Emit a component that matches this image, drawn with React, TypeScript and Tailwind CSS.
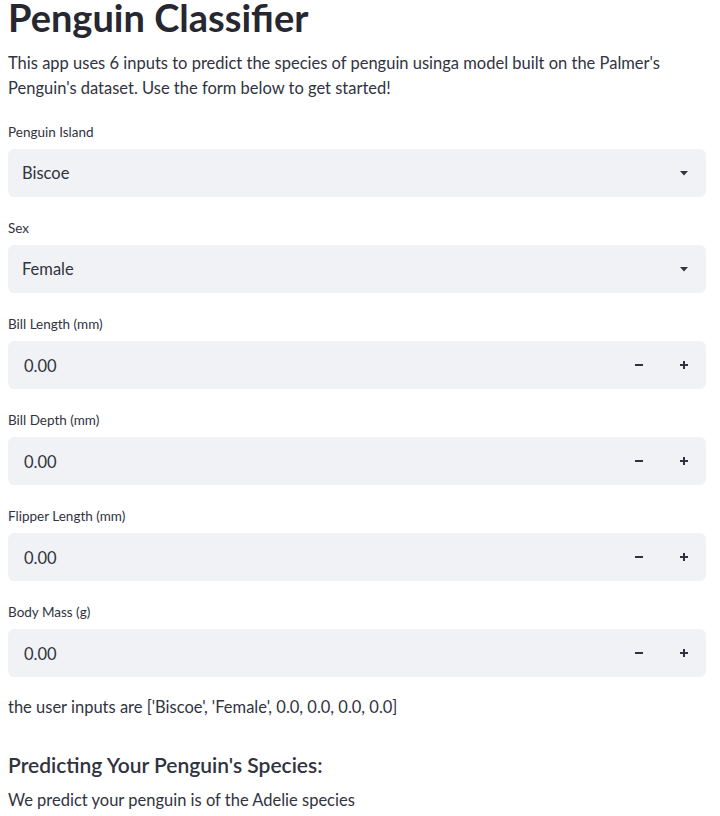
const font = { fontFamily: "Lato, 'Noto Sans', sans-serif" };

function Caret() {
  return (
    <svg width="10" height="6" viewBox="0 0 10 6" className="text-[#31333f]">
      <path d="M1 1 L9 1 L5 5.5 Z" fill="currentColor" />
    </svg>
  );
}

function Minus() {
  return (
    <svg width="10" height="10" viewBox="0 0 10 10">
      <rect x="1" y="4" width="8" height="2" fill="#31333f" />
    </svg>
  );
}

function Plus() {
  return (
    <svg width="10" height="10" viewBox="0 0 10 10">
      <rect x="1" y="4" width="8" height="2" fill="#31333f" />
      <rect x="4" y="1" width="2" height="8" fill="#31333f" />
    </svg>
  );
}

function SelectBox({ label, value }: { label: string; value: string }) {
  return (
    <div className="mt-[21px]">
      <div className="h-5 text-[13.5px] leading-5 text-[#31333f]">{label}</div>
      <div className="mt-[7px] flex h-12 items-center justify-between rounded-md bg-[#f0f2f6] pl-[14px] pr-[17px]">
        <span className="pt-[1px] text-[16.5px] text-[#31333f]">{value}</span>
        <Caret />
      </div>
    </div>
  );
}

function NumberBox({ label }: { label: string }) {
  return (
    <div className="mt-[21px]">
      <div className="h-5 text-[13.5px] leading-5 text-[#31333f]">{label}</div>
      <div className="mt-[7px] flex h-12 items-center rounded-md bg-[#f0f2f6]">
        <span className="flex-1 pl-4 pt-[3px] text-[16.5px] text-[#31333f]">0.00</span>
        <div className="flex h-full items-center">
          <div className="flex h-full w-[45px] items-center justify-center">
            <Minus />
          </div>
          <div className="flex h-full w-[45px] items-center justify-center">
            <Plus />
          </div>
        </div>
      </div>
    </div>
  );
}

export default function App() {
  return (
    <div className="min-h-screen bg-white pl-2 pr-[14px] text-[#31333f]" style={font}>
      <h1 className="-mt-[5px] text-[38px] font-bold leading-[1.2] text-[#262730]">Penguin Classifier</h1>
      <p className="mt-[10px] whitespace-nowrap text-[16.5px] leading-[25px]">
        This app uses 6 inputs to predict the species of penguin usinga model built on the Palmer's
        <br />
        Penguin's dataset. Use the form below to get started!
      </p>

      <SelectBox label="Penguin Island" value="Biscoe" />
      <SelectBox label="Sex" value="Female" />
      <NumberBox label="Bill Length (mm)" />
      <NumberBox label="Bill Depth (mm)" />
      <NumberBox label="Flipper Length (mm)" />
      <NumberBox label="Body Mass (g)" />

      <p className="mt-[17px] text-[16.5px] leading-[26px]">
        the user inputs are ['Biscoe', 'Female', 0.0, 0.0, 0.0, 0.0]
      </p>
      <h3 className="mt-[31px] text-[21px] font-semibold leading-7">Predicting Your Penguin's Species:</h3>
      <p className="mt-[8px] text-[16.5px] leading-[26px]">We predict your penguin is of the Adelie species</p>
    </div>
  );
}
